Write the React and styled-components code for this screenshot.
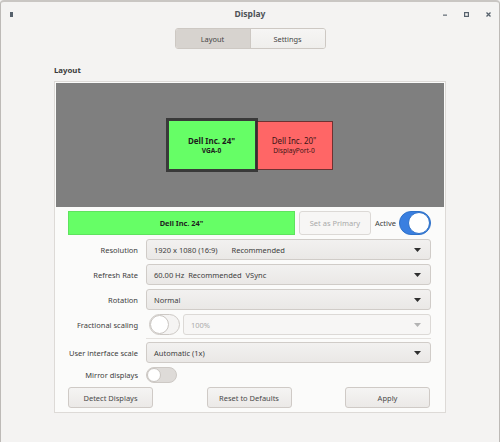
import React from 'react';
import styled, { createGlobalStyle } from 'styled-components';

const Global = createGlobalStyle`
	html, body {
		margin: 0;
		padding: 0;
		background: #f4f3f2;
	}
	body {
		font-family: "Noto Sans", "DejaVu Sans", sans-serif;
		color: #3d3d3d;
	}
`;

const Window = styled.div`
	width: 500px;
	height: 442px;
	box-sizing: border-box;
	border: 1px solid #bdbab7;
	border-bottom: none;
	border-top: 2px solid #c9c6c3;
	border-radius: 4px 4px 0 0;
	background: #f4f3f2;
	display: flex;
	flex-direction: column;
	overflow: hidden;
`;

const TitleBar = styled.div`
	height: 24px;
	display: grid;
	grid-template-columns: 1fr auto 1fr;
	align-items: center;
`;

const Title = styled.div`
	font-size: 8.5px;
	font-weight: 700;
	color: #4e5257;
	margin-top: -2px;
`;

const TitleLeft = styled.div`
	display: flex;
	padding-left: 9px;
`;

const TitleRight = styled.div`
	display: flex;
	justify-content: flex-end;
	align-items: center;
	gap: 17px;
	padding-right: 8px;
`;

const Tabs = styled.div`
	display: flex;
	align-self: center;
	width: 151px;
	height: 21px;
	box-sizing: border-box;
	margin-top: 2px;
	border: 1px solid #cdc8c3;
	border-radius: 3px;
	overflow: hidden;
`;

const Tab = styled.div`
	flex: 1;
	display: flex;
	align-items: center;
	justify-content: center;
	font-size: 7.4px;
	color: #454545;
	background: ${(p) => (p.$active ? '#d7d3cf' : 'linear-gradient(#f6f5f4, #efeeec)')};
	& + & {
		border-left: 1px solid #cdc8c3;
	}
`;

const SectionTitle = styled.div`
	margin: 16px 0 6px 53px;
	font-size: 7.8px;
	font-weight: 700;
	line-height: 10px;
	color: #3a3a3a;
`;

const Frame = styled.div`
	margin-left: 53px;
	width: 392px;
	box-sizing: border-box;
	border: 1px solid #dddad7;
	padding: 1px;
	background: #fbfbfa;
`;

const Canvas = styled.div`
	height: 124px;
	background: #7f7f7f;
	display: flex;
	align-items: center;
	justify-content: center;
`;

const Monitor = styled.div`
	box-sizing: border-box;
	width: ${(p) => p.$w}px;
	height: ${(p) => p.$h}px;
	display: flex;
	flex-direction: column;
	align-items: center;
	justify-content: center;
	gap: 1px;
	background: ${(p) => p.$bg};
	border: 1px solid ${(p) => p.$edge};
	box-shadow: ${(p) => (p.$selected ? '0 0 0 2px rgba(45, 45, 45, 0.85)' : 'none')};
	position: relative;
	z-index: ${(p) => (p.$selected ? 1 : 0)};
	color: ${(p) => p.$ink};
`;

const MonitorName = styled.div`
	font-size: 8px;
	font-weight: ${(p) => (p.$bold ? 700 : 400)};
	line-height: 10px;
`;

const MonitorPort = styled.div`
	font-size: 6.6px;
	font-weight: ${(p) => (p.$bold ? 700 : 400)};
	line-height: 8px;
`;

const Settings = styled.div`
	display: flex;
	flex-direction: column;
	gap: 4px;
	padding: 4px 13px 3px 12px;
`;

const Row = styled.div`
	display: flex;
	align-items: center;
	gap: ${(p) => p.$gap || 0}px;
	height: ${(p) => p.$h || 21}px;
`;

const Label = styled.div`
	width: 70px;
	flex-shrink: 0;
	margin-right: 8px;
	display: flex;
	justify-content: flex-end;
	white-space: nowrap;
	font-size: 7.5px;
	color: #3d3d3d;
`;

const MonitorBar = styled.div`
	flex: 1;
	height: 24px;
	box-sizing: border-box;
	background: #66fe66;
	border: 1px solid #5ee35e;
	display: flex;
	align-items: center;
	justify-content: center;
	font-size: 7.4px;
	font-weight: 700;
	color: #1f1f1f;
`;

const Button = styled.button`
	width: ${(p) => p.$w || 85}px;
	height: ${(p) => p.$h || 21}px;
	box-sizing: border-box;
	padding: 0;
	border: 1px solid ${(p) => (p.disabled ? '#dcd9d6' : '#cfcac6')};
	border-radius: 3px;
	background: ${(p) => (p.disabled ? '#f7f6f5' : 'linear-gradient(#f5f4f3, #ebe9e7)')};
	font-family: inherit;
	font-size: 7.5px;
	color: ${(p) => (p.disabled ? '#a9a9a9' : '#4a4a4a')};
	flex-shrink: 0;
`;

const Small = styled.span`
	min-width: 21px;
	font-size: 7.5px;
	color: #3d3d3d;
	margin-right: -1px;
`;

const Switch = styled.div`
	width: ${(p) => p.$w}px;
	height: ${(p) => p.$h}px;
	box-sizing: border-box;
	flex-shrink: 0;
	border-radius: ${(p) => p.$h / 2}px;
	border: 1px solid ${(p) => (p.$on ? '#2f72c9' : '#cdc9c5')};
	background: ${(p) => (p.$on ? '#3a7fe0' : p.$track)};
	display: flex;
	justify-content: ${(p) => (p.$on ? 'flex-end' : 'flex-start')};
	&::after {
		content: '';
		width: ${(p) => p.$h - 2}px;
		height: ${(p) => p.$h - 2}px;
		box-sizing: border-box;
		border-radius: 50%;
		background: #ffffff;
		border: 1px solid ${(p) => (p.$on ? '#2f72c9' : '#c9c5c1')};
	}
`;

const Select = styled.div`
	flex: 1;
	height: 100%;
	box-sizing: border-box;
	display: flex;
	align-items: center;
	padding: 0 9px 0 7px;
	border: 1px solid ${(p) => (p.$disabled ? '#dcd9d6' : '#d0ccc8')};
	border-radius: 3px;
	background: ${(p) => (p.$disabled ? '#f7f6f5' : 'linear-gradient(#f2f1f0, #eae8e6)')};
	font-size: 7.5px;
	color: ${(p) => (p.$disabled ? '#ababab' : '#3d3d3d')};
	white-space: nowrap;
	& > svg {
		margin-left: auto;
	}
`;

const Part = styled.span`
	margin-right: ${(p) => p.$gap || 0}px;
`;

const Separator = styled.div`
	height: 1px;
	margin: -1px 0 -1px 78px;
	background: #e4e1de;
`;

const ButtonRow = styled.div`
	display: flex;
	justify-content: space-between;
	padding-right: 1px;
`;

const Arrow = ({ disabled }) => (
	<svg width="7" height="4" viewBox="0 0 7 4">
		<path d="M0 0 H7 L3.5 4 Z" fill={disabled ? '#b3b3b3' : '#2f2f2f'} />
	</svg>
);

const Dropdown = ({ children, disabled }) => (
	<Select $disabled={disabled}>
		{children}
		<Arrow disabled={disabled} />
	</Select>
);

export default function App() {
	return (
		<>
			<Global />
			<Window>
				<TitleBar>
					<TitleLeft>
						<svg width="3" height="5" viewBox="0 0 3 5">
							<rect width="3" height="5" fill="#56616c" />
						</svg>
					</TitleLeft>
					<Title>Display</Title>
					<TitleRight>
						<svg width="4" height="4" viewBox="0 0 4 4">
							<rect y="2.5" width="4" height="1.3" fill="#6b747d" />
						</svg>
						<svg width="5" height="5" viewBox="0 0 5 5">
							<rect x="0.6" y="0.6" width="3.8" height="3.8" fill="none" stroke="#56616c" strokeWidth="1.2" />
						</svg>
						<svg width="5" height="5" viewBox="0 0 5 5">
							<path d="M0.5 0.5 L4.5 4.5 M4.5 0.5 L0.5 4.5" stroke="#56616c" strokeWidth="1.3" />
						</svg>
					</TitleRight>
				</TitleBar>

				<Tabs>
					<Tab $active>Layout</Tab>
					<Tab>Settings</Tab>
				</Tabs>

				<SectionTitle>Layout</SectionTitle>

				<Frame>
					<Canvas>
						<Monitor $w={88} $h={50} $bg="#66fe66" $edge="#3a3a3a" $ink="#1c1c1c" $selected>
							<MonitorName $bold>Dell Inc. 24"</MonitorName>
							<MonitorPort $bold>VGA-0</MonitorPort>
						</Monitor>
						<Monitor $w={77} $h={49} $bg="#ff6666" $edge="#6e3232" $ink="#3b1515">
							<MonitorName>Dell Inc. 20"</MonitorName>
							<MonitorPort>DisplayPort-0</MonitorPort>
						</Monitor>
					</Canvas>

					<Settings>
						<Row $h={24} $gap={4}>
							<MonitorBar>Dell Inc. 24"</MonitorBar>
							<Button $w={72} $h={24} disabled>
								Set as Primary
							</Button>
							<Small>Active</Small>
							<Switch $on $w={32} $h={24} />
						</Row>

						<Row>
							<Label>Resolution</Label>
							<Dropdown>
								<Part $gap={14}>1920 x 1080 (16:9)</Part>
								<Part>Recommended</Part>
							</Dropdown>
						</Row>

						<Row>
							<Label>Refresh Rate</Label>
							<Dropdown>
								<Part $gap={4}>60.00 Hz</Part>
								<Part $gap={4}>Recommended</Part>
								<Part>VSync</Part>
							</Dropdown>
						</Row>

						<Row>
							<Label>Rotation</Label>
							<Dropdown>
								<Part>Normal</Part>
							</Dropdown>
						</Row>

						<Row $gap={3}>
							<Label>Fractional scaling</Label>
							<Switch $w={31} $h={21} $track="#f5f4f3" />
							<Dropdown disabled>
								<Part>100%</Part>
							</Dropdown>
						</Row>

						<Separator />

						<Row>
							<Label>User interface scale</Label>
							<Dropdown>
								<Part>Automatic (1x)</Part>
							</Dropdown>
						</Row>

						<Row $h={16}>
							<Label>Mirror displays</Label>
							<Switch $w={31} $h={16} $track="#dedbd8" />
						</Row>

						<ButtonRow>
							<Button>Detect Displays</Button>
							<Button>Reset to Defaults</Button>
							<Button>Apply</Button>
						</ButtonRow>
					</Settings>
				</Frame>
			</Window>
		</>
	);
}
